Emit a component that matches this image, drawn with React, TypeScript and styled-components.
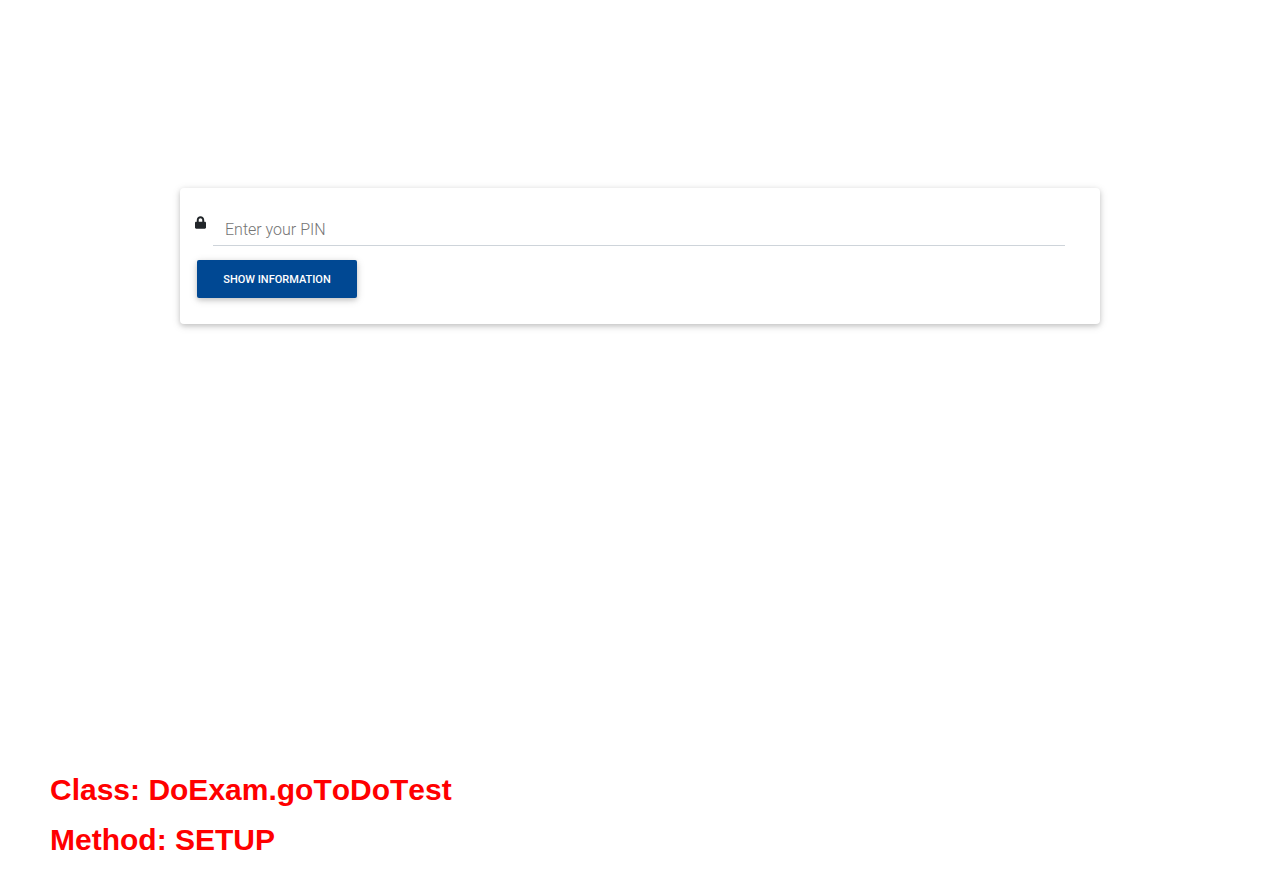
import React from 'react';
import styled, { createGlobalStyle } from 'styled-components';

const GlobalStyle = createGlobalStyle`
  *, *::before, *::after { box-sizing: border-box; }
  body {
    margin: 0;
    background: #fff;
    color: #212529;
    font-family: Roboto, sans-serif;
    font-weight: 300;
  }
`;

const Page = styled.div`
  min-height: 100vh;
  display: flex;
  flex-direction: column;
  justify-content: space-between;
`;

const Main = styled.main`
  padding: 188px 180px 0;
`;

const Card = styled.form`
  padding: 22px 15px 26px;
  border-radius: 4px;
  background: #fff;
  box-shadow: 0 2px 5px 0 rgba(0, 0, 0, 0.16), 0 2px 10px 0 rgba(0, 0, 0, 0.12);
`;

const Field = styled.div`
  display: flex;
  align-items: flex-start;
  padding-right: 20px;
`;

const IconLabel = styled.label`
  display: flex;
  width: 18px;
  padding-top: 6px;
`;

const LockIcon = styled.svg`
  width: 11px;
  height: 13px;
  fill: #212529;
`;

const PinInput = styled.input`
  flex: 1;
  min-width: 0;
  height: 36px;
  padding: 4px 12px 0;
  border: 0;
  border-bottom: 1px solid #ced4da;
  outline: 0;
  background: transparent;
  color: #495057;
  font: 300 16px/24px Roboto, sans-serif;

  &::placeholder {
    color: #757575;
    opacity: 1;
  }
`;

const SubmitButton = styled.button`
  display: block;
  width: 160px;
  height: 38px;
  margin: 14px 2px 0;
  padding: 2px 0 0;
  border: 0;
  border-radius: 2px;
  background: #004893;
  box-shadow: 0 2px 5px 0 rgba(0, 0, 0, 0.16), 0 2px 10px 0 rgba(0, 0, 0, 0.12);
  color: #fff;
  font: 500 11px/16px Roboto, sans-serif;
  text-transform: uppercase;
  cursor: pointer;
`;

const TestInfo = styled.footer`
  padding: 0 50px 4px;
  color: #f00;
  font: bold 30px/50px "Liberation Sans", Arial, sans-serif;
  font-kerning: none;
`;

const InfoLine = styled.p`
  margin: 0;
`;

export default function App() {
  return (
    <Page>
      <GlobalStyle />
      <Main>
        <Card onSubmit={(event: React.FormEvent) => event.preventDefault()}>
          <Field>
            <IconLabel htmlFor="pin" aria-label="PIN">
              <LockIcon viewBox="0 0 448 512" aria-hidden="true">
                <path d="M400 224h-24v-72C376 68.200 307.800 0 224 0S72 68.200 72 152v72H48c-26.500 0-48 21.500-48 48v192c0 26.500 21.500 48 48 48h352c26.500 0 48-21.500 48-48V272c0-26.500-21.500-48-48-48zm-104 0H152v-72c0-39.700 32.300-72 72-72s72 32.300 72 72v72z" />
              </LockIcon>
            </IconLabel>
            <PinInput id="pin" type="text" placeholder="Enter your PIN" />
          </Field>
          <SubmitButton type="submit">Show information</SubmitButton>
        </Card>
      </Main>
      <TestInfo>
        <InfoLine>Class: DoExam.goToDoTest</InfoLine>
        <InfoLine>Method: SETUP</InfoLine>
      </TestInfo>
    </Page>
  );
}
